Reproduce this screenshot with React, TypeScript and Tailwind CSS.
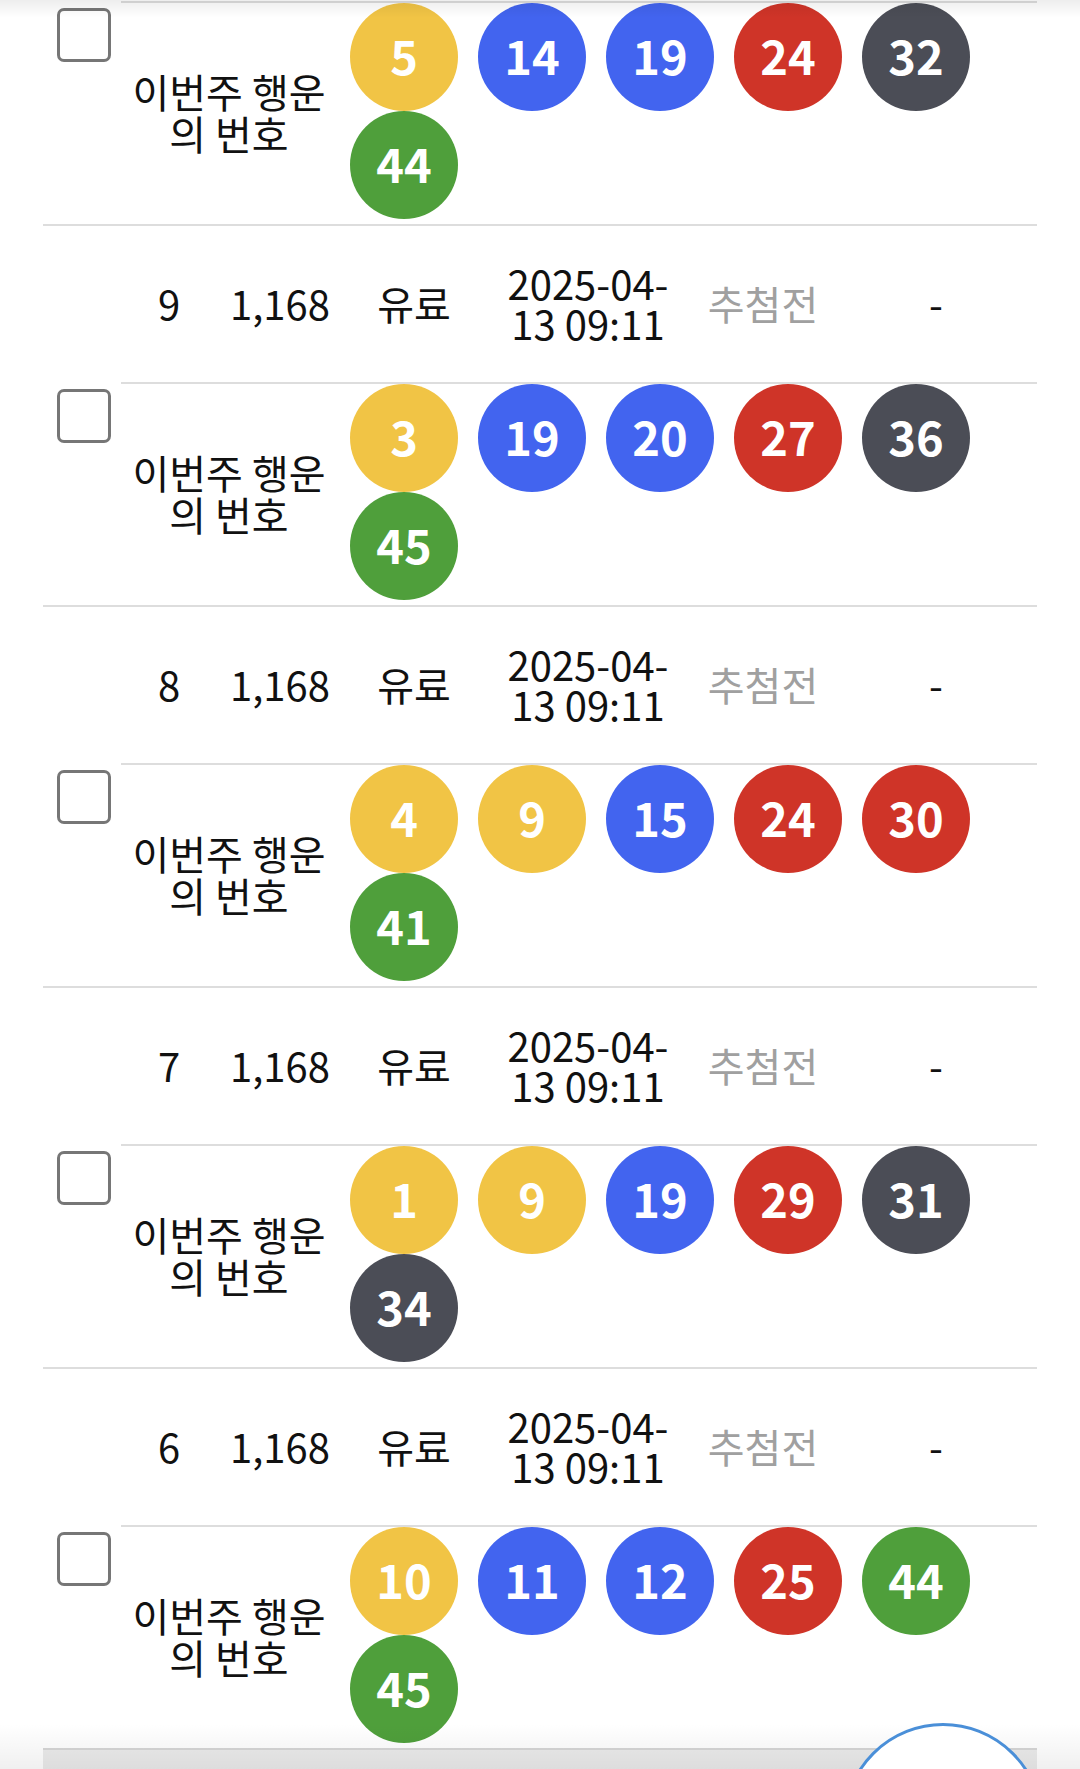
import React from 'react';

type Ticket = { no: number; nums: number[] };

const tickets: Ticket[] = [
  { no: 10, nums: [5, 14, 19, 24, 32, 44] },
  { no: 9, nums: [3, 19, 20, 27, 36, 45] },
  { no: 8, nums: [4, 9, 15, 24, 30, 41] },
  { no: 7, nums: [1, 9, 19, 29, 31, 34] },
  { no: 6, nums: [10, 11, 12, 25, 44, 45] },
];

function ballColor(n: number) {
  if (n <= 10) return 'bg-[#f1c445]';
  if (n <= 20) return 'bg-[#4264ef]';
  if (n <= 30) return 'bg-[#cf3428]';
  if (n <= 40) return 'bg-[#4b4d56]';
  return 'bg-[#4f9f3b]';
}

function Ball({ n }: { n: number }) {
  return (
    <div
      className={`w-[108px] h-[108px] rounded-full flex items-center justify-center pb-[5px] text-white font-bold text-[47px] leading-none ${ballColor(n)}`}
    >
      {n}
    </div>
  );
}

function NumbersRow({ nums }: { nums: number[] }) {
  return (
    <div className="flex">
      <div className="w-[78px] shrink-0 pl-[14px] pt-[7px]">
        <div className="w-[54px] h-[54px] rounded-[7px] border-[3px] border-[#767676] bg-white" />
      </div>
      <div className="flex-1 flex border-t-2 border-[#dddddd] pb-[5px]">
        <div className="w-[216px] shrink-0 flex items-center justify-center text-center text-[40px] leading-[42px] text-[#111] pt-[2px]">
          이번주 행운<br />의 번호
        </div>
        <div className="ml-[13px] w-[640px] flex flex-wrap gap-x-5 content-start">
          {nums.map((n, i) => (
            <Ball key={i} n={n} />
          ))}
        </div>
      </div>
    </div>
  );
}

function InfoRow({ no }: { no: number }) {
  return (
    <div className="flex items-center h-[158px] pb-[3px] border-t-2 border-[#dddddd] text-[40px] leading-[48px] text-[#111]">
      <div className="w-[78px] shrink-0" />
      <div className="w-[96px] text-center">{no}</div>
      <div className="w-[126px] text-center">1,168</div>
      <div className="w-[142px] text-center">유료</div>
      <div className="w-[206px] text-center leading-[40px]">
        2025-04-<br />13 09:11
      </div>
      <div className="w-[144px] text-center text-[#a0a0a0]">추첨전</div>
      <div className="w-[202px] text-center">-</div>
    </div>
  );
}

export default function App() {
  return (
    <div
      className="relative w-[1080px] h-[1769px] overflow-hidden bg-white pt-px"
      style={{ fontFamily: '"Noto Sans CJK KR", "Noto Sans", sans-serif' }}
    >
      <div className="ml-[43px] w-[994px]">
        {tickets.map((t, i) => (
          <div key={t.no}>
            {i > 0 && <InfoRow no={t.no} />}
            <NumbersRow nums={t.nums} />
          </div>
        ))}
        <div className="h-[40px] border-t-2 border-[#d6d6d6] bg-[#ebebeb]" />
      </div>

      <div className="absolute left-0 top-0 w-full h-[18px] bg-gradient-to-b from-black/[0.07] to-transparent pointer-events-none" />
      <div className="absolute left-0 bottom-0 w-full h-[45px] bg-gradient-to-b from-transparent to-black/[0.06] pointer-events-none" />

      <div className="absolute left-[843px] top-[1723px] w-[200px] h-[200px] rounded-full border-[3px] border-[#4a8fd8] bg-white" />
    </div>
  );
}
